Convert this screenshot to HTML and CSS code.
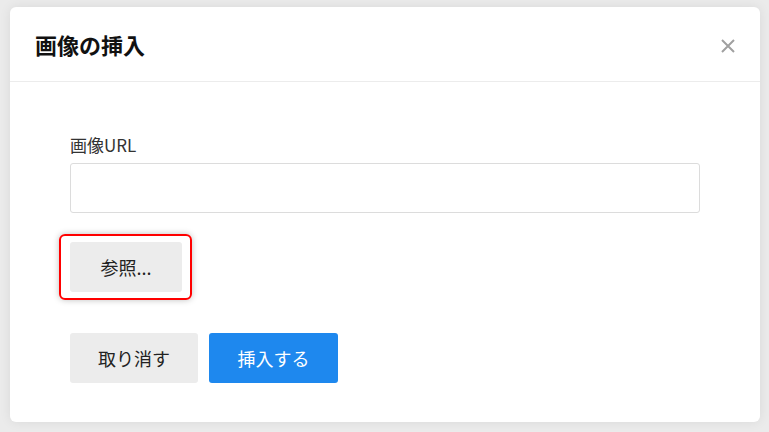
FILE: index.html
```html
<!DOCTYPE html>
<html lang="ja">
<head>
  <meta charset="UTF-8" />
  <meta name="viewport" content="width=device-width, initial-scale=1" />
  <title>画像の挿入</title>
  <link rel="stylesheet" href="styles.css">
</head>
<body>
  <div class="backdrop">
    <div class="dialog">
      <div class="dialog-header">
        <h2 class="dialog-title">画像の挿入</h2>
        <button class="close-btn" aria-label="閉じる">
          <svg width="16" height="16" viewBox="0 0 16 16">
            <path d="M2 2 L14 14 M14 2 L2 14" stroke="#a0a0a0" stroke-width="2" fill="none" />
          </svg>
        </button>
      </div>
      <div class="dialog-body">
        <label class="field-label" for="imageUrl">画像URL</label>
        <input class="text-input" id="imageUrl" type="text">
        <div class="highlight">
          <button class="btn btn-grey btn-browse">参照...</button>
        </div>
        <div class="actions">
          <button class="btn btn-grey btn-cancel">取り消す</button>
          <button class="btn btn-blue btn-insert">挿入する</button>
        </div>
      </div>
    </div>
  </div>
</body>
</html>
```

FILE: styles.css
```css
body {
  margin: 0;
  font-family: "Noto Sans CJK JP", "Noto Sans", sans-serif;
  color: #222;
  background: #ebebeb;
  overflow: hidden;
}
.backdrop {
  width: 769px;
  height: 432px;
  padding: 7px 9px 0 10px;
  box-sizing: border-box;
}
.dialog {
  background: #fff;
  border-radius: 6px;
  height: 415px;
  box-shadow: 0 0 12px rgba(0,0,0,0.08);
}
.dialog-header {
  height: 75px;
  border-bottom: 1px solid #ececec;
  display: flex;
  align-items: center;
  justify-content: space-between;
  padding: 0 24px 0 25px;
  box-sizing: border-box;
}
.dialog-title {
  margin: 0;
  font-size: 22px;
  font-weight: bold;
  color: #111;
}
.close-btn {
  background: none;
  border: none;
  padding: 0;
  width: 16px;
  height: 16px;
  margin-top: 3px;
  cursor: pointer;
}
.dialog-body {
  padding: 50px 60px 0 60px;
  display: flex;
  flex-direction: column;
  align-items: flex-start;
}
.field-label {
  font-size: 17px;
  line-height: 25px;
  color: #333;
}
.text-input {
  margin-top: 6px;
  width: 630px;
  height: 50px;
  box-sizing: border-box;
  border: 1px solid #dcdcdc;
  border-radius: 3px;
  outline: none;
}
.highlight {
  margin: 21px 0 0 -11px;
  padding: 6px 8px 6px 9px;
  border: 2px solid #f00;
  border-radius: 6px;
  box-shadow: 0 0 6px rgba(0,0,0,0.25);
}
.btn {
  border: none;
  border-radius: 3px;
  height: 50px;
  font-family: inherit;
  font-size: 18px;
  cursor: pointer;
}
.btn-grey {
  background: #ececec;
  color: #222;
}
.btn-blue {
  background: #1e88ee;
  color: #fff;
}
.btn-browse {
  width: 112px;
}
.actions {
  margin-top: 33px;
  display: flex;
  gap: 11px;
}
.btn-cancel {
  width: 128px;
}
.btn-insert {
  width: 129px;
}
```
